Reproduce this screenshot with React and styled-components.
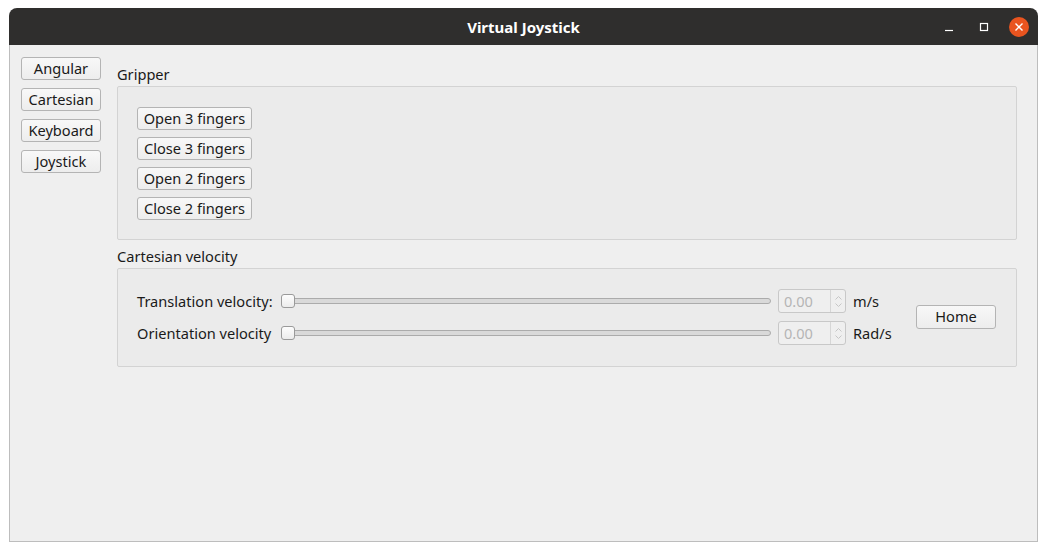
import React from 'react';
import styled, { createGlobalStyle } from 'styled-components';

const GlobalStyle = createGlobalStyle`
    html, body {
        margin: 0;
        padding: 0;
        background: #ffffff;
    }
    body {
        font-family: "Noto Sans", "DejaVu Sans", sans-serif;
        font-size: 14.6px;
        color: #1a1a1a;
    }
`;

const Window = styled.div`
    margin: 8px 0 0 9px;
    width: 1029px;
    height: 534px;
    display: flex;
    flex-direction: column;
`;

const TitleBar = styled.div`
    height: 37px;
    background: #2f2e2d;
    border-radius: 8px 8px 0 0;
    display: flex;
    align-items: center;
    justify-content: center;
    position: relative;
    color: #ffffff;
    font-weight: bold;
    font-size: 15px;
`;

const Controls = styled.div`
    position: absolute;
    right: 9px;
    top: 0;
    height: 37px;
    display: flex;
    align-items: center;
    gap: 15px;
`;

const CtrlBtn = styled.div`
    width: 20px;
    height: 20px;
    display: flex;
    align-items: center;
    justify-content: center;
    border-radius: 50%;
    background: ${p => (p.$close ? '#e9541f' : 'transparent')};
`;

const Body = styled.div`
    flex: 1;
    background: #efefef;
    border: 1px solid #bdbdbd;
    border-top: none;
    display: flex;
    gap: 16px;
    padding: 12px 20px 0 11px;
`;

const SideNav = styled.div`
    display: flex;
    flex-direction: column;
    gap: 8px;
    width: 80px;
`;

const Button = styled.button`
    font-family: inherit;
    font-size: 14.6px;
    color: #1a1a1a;
    height: ${p => p.$h || 23}px;
    width: ${p => p.$w || 80}px;
    padding: 0 0 2px 0;
    border: 1px solid #b4b4b4;
    border-radius: 3px;
    background: linear-gradient(#f8f8f8, #ededed);
    display: flex;
    align-items: center;
    justify-content: center;
    white-space: nowrap;
    cursor: pointer;
`;

const Main = styled.div`
    flex: 1;
    display: flex;
    flex-direction: column;
    padding-top: 9px;
    gap: 8px;
`;

const Section = styled.div`
    display: flex;
    flex-direction: column;
    gap: 2px;
`;

const SectionTitle = styled.div`
    height: 18px;
    line-height: 17px;
`;

const GroupBox = styled.div`
    border: 1px solid #d3d3d3;
    background: #ebebeb;
    border-radius: 2px;
    padding: 20px 20px ${p => p.$pb || 19}px 19px;
`;

const ButtonStack = styled.div`
    display: flex;
    flex-direction: column;
    gap: 7px;
`;

const VelocityGrid = styled.div`
    display: grid;
    grid-template-columns: 137px 1fr 68px 56px 80px;
    grid-template-rows: 24px 24px;
    column-gap: 7px;
    row-gap: 8px;
    align-items: center;
`;

const Label = styled.div`
    white-space: nowrap;
`;

const SliderWrap = styled.div`
    position: relative;
    height: 14px;
    display: flex;
    align-items: center;
`;

const Groove = styled.div`
    flex: 1;
    height: 4px;
    border: 1px solid #ababab;
    border-radius: 3px;
    background: #d9d9d9;
`;

const Handle = styled.div`
    position: absolute;
    left: 0;
    top: 0;
    width: 12px;
    height: 12px;
    border: 1px solid #9a9a9a;
    border-radius: 3px;
    background: linear-gradient(#fdfdfd, #ececec);
`;

const SpinBox = styled.div`
    height: 24px;
    box-sizing: border-box;
    border: 1px solid #c8c8c8;
    border-radius: 3px;
    background: #efefef;
    display: flex;
`;

const SpinValue = styled.div`
    flex: 1;
    padding-left: 5px;
    line-height: 22px;
    color: #b5b5b5;
`;

const SpinArrows = styled.div`
    width: 14px;
    border-left: 1px solid #d6d6d6;
    display: flex;
    flex-direction: column;
    align-items: center;
    justify-content: center;
    gap: 3px;
`;

const HomeCell = styled.div`
    grid-column: 5;
    grid-row: 1 / span 2;
    align-self: center;
`;

const Slider = () => (
    <SliderWrap>
        <Groove />
        <Handle />
    </SliderWrap>
);

const Spin = () => (
    <SpinBox>
        <SpinValue>0.00</SpinValue>
        <SpinArrows>
            <svg width="7" height="4" viewBox="0 0 7 4">
                <path d="M0.5 3.5 L3.5 0.5 L6.5 3.5" fill="none" stroke="#c6c6c6" strokeWidth="1" />
            </svg>
            <svg width="7" height="4" viewBox="0 0 7 4">
                <path d="M0.5 0.5 L3.5 3.5 L6.5 0.5" fill="none" stroke="#c6c6c6" strokeWidth="1" />
            </svg>
        </SpinArrows>
    </SpinBox>
);

const App = () => {
    return (
        <>
            <GlobalStyle />
            <Window>
                <TitleBar>
                    Virtual Joystick
                    <Controls>
                        <CtrlBtn>
                            <svg width="10" height="10" viewBox="0 0 10 10">
                                <path d="M1 8.5 H9" stroke="#fff" strokeWidth="1.2" />
                            </svg>
                        </CtrlBtn>
                        <CtrlBtn>
                            <svg width="10" height="10" viewBox="0 0 10 10">
                                <rect x="1.5" y="1.5" width="7" height="7" fill="none" stroke="#fff" strokeWidth="1.2" />
                            </svg>
                        </CtrlBtn>
                        <CtrlBtn $close>
                            <svg width="10" height="10" viewBox="0 0 10 10">
                                <path d="M1.5 1.5 L8.5 8.5 M8.5 1.5 L1.5 8.5" stroke="#fff" strokeWidth="1.4" />
                            </svg>
                        </CtrlBtn>
                    </Controls>
                </TitleBar>
                <Body>
                    <SideNav>
                        <Button>Angular</Button>
                        <Button>Cartesian</Button>
                        <Button>Keyboard</Button>
                        <Button>Joystick</Button>
                    </SideNav>
                    <Main>
                        <Section>
                            <SectionTitle>Gripper</SectionTitle>
                            <GroupBox>
                                <ButtonStack>
                                    <Button $w={115}>Open 3 fingers</Button>
                                    <Button $w={115}>Close 3 fingers</Button>
                                    <Button $w={115}>Open 2 fingers</Button>
                                    <Button $w={115}>Close 2 fingers</Button>
                                </ButtonStack>
                            </GroupBox>
                        </Section>
                        <Section>
                            <SectionTitle>Cartesian velocity</SectionTitle>
                            <GroupBox $pb={21}>
                                <VelocityGrid>
                                    <Label>Translation velocity:</Label>
                                    <Slider />
                                    <Spin />
                                    <Label>m/s</Label>
                                    <HomeCell>
                                        <Button $h={24}>Home</Button>
                                    </HomeCell>
                                    <Label>Orientation velocity</Label>
                                    <Slider />
                                    <Spin />
                                    <Label>Rad/s</Label>
                                </VelocityGrid>
                            </GroupBox>
                        </Section>
                    </Main>
                </Body>
            </Window>
        </>
    );
};

export default App;
